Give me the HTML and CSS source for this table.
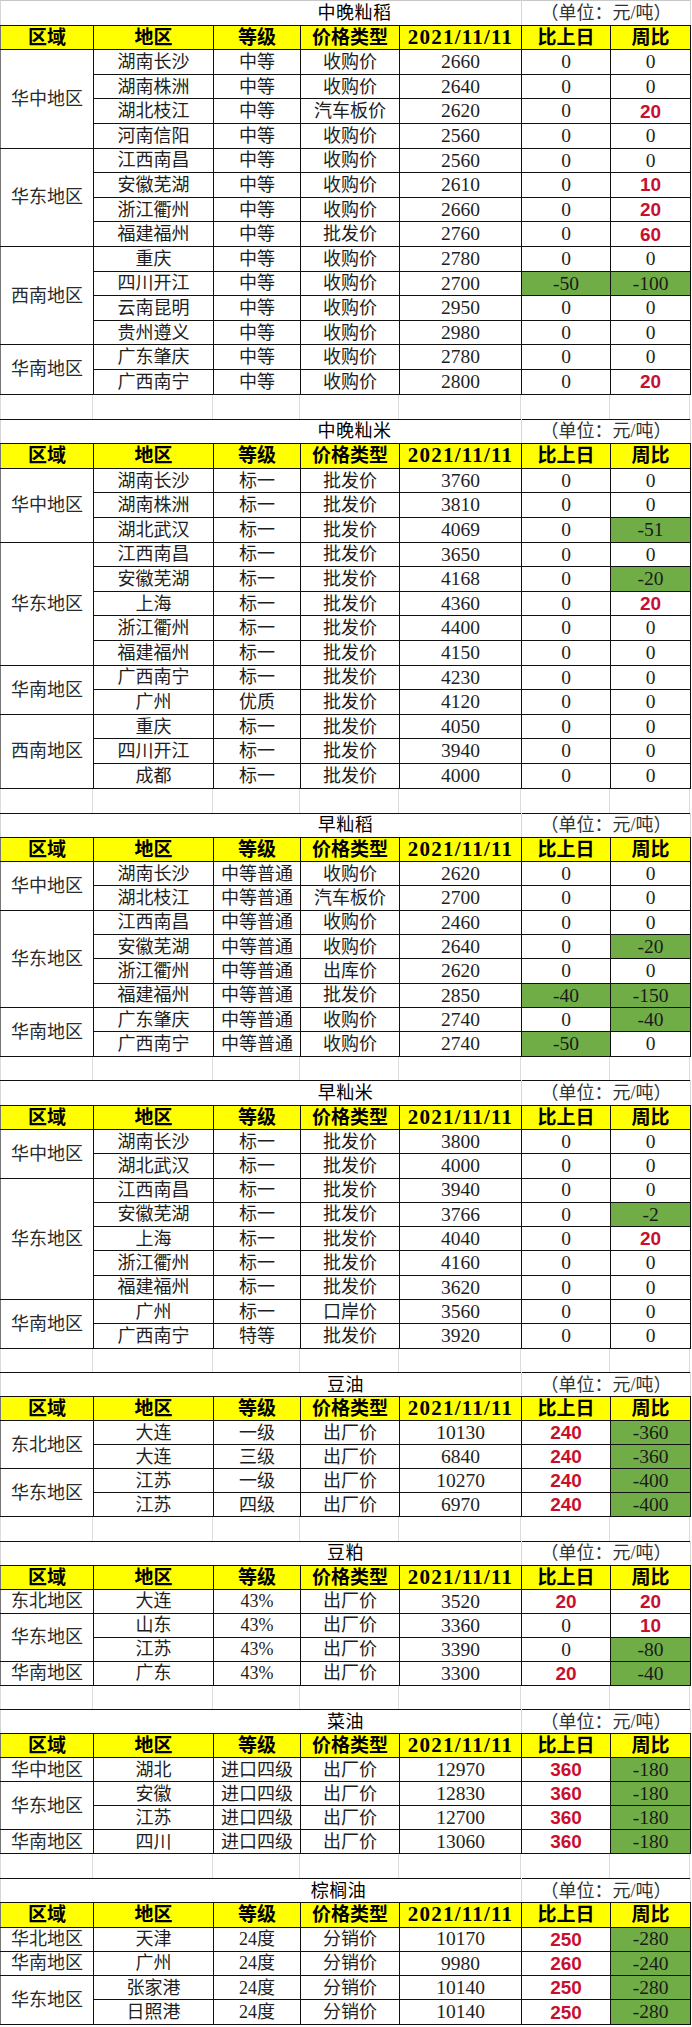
FILE: index.html
```html
<!DOCTYPE html>
<html lang="zh-CN">
<head>
<meta charset="utf-8">
<title>粮油价格</title>
<link rel="stylesheet" href="styles.css">
</head>
<body>
<div class="sheet">

<table class="grid first">
<colgroup><col class="c1"><col class="c2"><col class="c3"><col class="c4"><col class="c5"><col class="c6"><col class="c7"></colgroup>
<tr class="title"><td colspan="5" class="ttl wide">中晚籼稻</td><td colspan="2" class="unit">（单位：元/吨）</td></tr>
<tr class="head"><th>区域</th><th>地区</th><th>等级</th><th>价格类型</th><th class="dt">2021/11/11</th><th>比上日</th><th>周比</th></tr>
<tr><td rowspan="4" class="reg">华中地区</td><td>湖南长沙</td><td>中等</td><td>收购价</td><td class="n">2660</td><td class="n">0</td><td class="n">0</td></tr>
<tr><td>湖南株洲</td><td>中等</td><td>收购价</td><td class="n">2640</td><td class="n">0</td><td class="n">0</td></tr>
<tr><td>湖北枝江</td><td>中等</td><td>汽车板价</td><td class="n">2620</td><td class="n">0</td><td class="n up">20</td></tr>
<tr><td>河南信阳</td><td>中等</td><td>收购价</td><td class="n">2560</td><td class="n">0</td><td class="n">0</td></tr>
<tr><td rowspan="4" class="reg">华东地区</td><td>江西南昌</td><td>中等</td><td>收购价</td><td class="n">2560</td><td class="n">0</td><td class="n">0</td></tr>
<tr><td>安徽芜湖</td><td>中等</td><td>收购价</td><td class="n">2610</td><td class="n">0</td><td class="n up">10</td></tr>
<tr><td>浙江衢州</td><td>中等</td><td>收购价</td><td class="n">2660</td><td class="n">0</td><td class="n up">20</td></tr>
<tr><td>福建福州</td><td>中等</td><td>批发价</td><td class="n">2760</td><td class="n">0</td><td class="n up">60</td></tr>
<tr><td rowspan="4" class="reg">西南地区</td><td>重庆</td><td>中等</td><td>收购价</td><td class="n">2780</td><td class="n">0</td><td class="n">0</td></tr>
<tr><td>四川开江</td><td>中等</td><td>收购价</td><td class="n">2700</td><td class="n dn">-50</td><td class="n dn">-100</td></tr>
<tr><td>云南昆明</td><td>中等</td><td>收购价</td><td class="n">2950</td><td class="n">0</td><td class="n">0</td></tr>
<tr><td>贵州遵义</td><td>中等</td><td>收购价</td><td class="n">2980</td><td class="n">0</td><td class="n">0</td></tr>
<tr><td rowspan="2" class="reg">华南地区</td><td>广东肇庆</td><td>中等</td><td>收购价</td><td class="n">2780</td><td class="n">0</td><td class="n">0</td></tr>
<tr><td>广西南宁</td><td>中等</td><td>收购价</td><td class="n">2800</td><td class="n">0</td><td class="n up">20</td></tr>
</table>
<div class="gap"><span></span><span></span><span></span><span></span><span></span><span></span><span></span></div>

<table class="grid">
<colgroup><col class="c1"><col class="c2"><col class="c3"><col class="c4"><col class="c5"><col class="c6"><col class="c7"></colgroup>
<tr class="title"><td colspan="5" class="ttl wide">中晚籼米</td><td colspan="2" class="unit">（单位：元/吨）</td></tr>
<tr class="head"><th>区域</th><th>地区</th><th>等级</th><th>价格类型</th><th class="dt">2021/11/11</th><th>比上日</th><th>周比</th></tr>
<tr><td rowspan="3" class="reg">华中地区</td><td>湖南长沙</td><td>标一</td><td>批发价</td><td class="n">3760</td><td class="n">0</td><td class="n">0</td></tr>
<tr><td>湖南株洲</td><td>标一</td><td>批发价</td><td class="n">3810</td><td class="n">0</td><td class="n">0</td></tr>
<tr><td>湖北武汉</td><td>标一</td><td>批发价</td><td class="n">4069</td><td class="n">0</td><td class="n dn">-51</td></tr>
<tr><td rowspan="5" class="reg">华东地区</td><td>江西南昌</td><td>标一</td><td>批发价</td><td class="n">3650</td><td class="n">0</td><td class="n">0</td></tr>
<tr><td>安徽芜湖</td><td>标一</td><td>批发价</td><td class="n">4168</td><td class="n">0</td><td class="n dn">-20</td></tr>
<tr><td>上海</td><td>标一</td><td>批发价</td><td class="n">4360</td><td class="n">0</td><td class="n up">20</td></tr>
<tr><td>浙江衢州</td><td>标一</td><td>批发价</td><td class="n">4400</td><td class="n">0</td><td class="n">0</td></tr>
<tr><td>福建福州</td><td>标一</td><td>批发价</td><td class="n">4150</td><td class="n">0</td><td class="n">0</td></tr>
<tr><td rowspan="2" class="reg">华南地区</td><td>广西南宁</td><td>标一</td><td>批发价</td><td class="n">4230</td><td class="n">0</td><td class="n">0</td></tr>
<tr><td>广州</td><td>优质</td><td>批发价</td><td class="n">4120</td><td class="n">0</td><td class="n">0</td></tr>
<tr><td rowspan="3" class="reg">西南地区</td><td>重庆</td><td>标一</td><td>批发价</td><td class="n">4050</td><td class="n">0</td><td class="n">0</td></tr>
<tr><td>四川开江</td><td>标一</td><td>批发价</td><td class="n">3940</td><td class="n">0</td><td class="n">0</td></tr>
<tr><td>成都</td><td>标一</td><td>批发价</td><td class="n">4000</td><td class="n">0</td><td class="n">0</td></tr>
</table>
<div class="gap"><span></span><span></span><span></span><span></span><span></span><span></span><span></span></div>

<table class="grid compact">
<colgroup><col class="c1"><col class="c2"><col class="c3"><col class="c4"><col class="c5"><col class="c6"><col class="c7"></colgroup>
<tr class="title"><td colspan="5" class="ttl">早籼稻</td><td colspan="2" class="unit">（单位：元/吨）</td></tr>
<tr class="head"><th>区域</th><th>地区</th><th>等级</th><th>价格类型</th><th class="dt">2021/11/11</th><th>比上日</th><th>周比</th></tr>
<tr><td rowspan="2" class="reg">华中地区</td><td>湖南长沙</td><td>中等普通</td><td>收购价</td><td class="n">2620</td><td class="n">0</td><td class="n">0</td></tr>
<tr><td>湖北枝江</td><td>中等普通</td><td>汽车板价</td><td class="n">2700</td><td class="n">0</td><td class="n">0</td></tr>
<tr><td rowspan="4" class="reg">华东地区</td><td>江西南昌</td><td>中等普通</td><td>收购价</td><td class="n">2460</td><td class="n">0</td><td class="n">0</td></tr>
<tr><td>安徽芜湖</td><td>中等普通</td><td>收购价</td><td class="n">2640</td><td class="n">0</td><td class="n dn">-20</td></tr>
<tr><td>浙江衢州</td><td>中等普通</td><td>出库价</td><td class="n">2620</td><td class="n">0</td><td class="n">0</td></tr>
<tr><td>福建福州</td><td>中等普通</td><td>批发价</td><td class="n">2850</td><td class="n dn">-40</td><td class="n dn">-150</td></tr>
<tr><td rowspan="2" class="reg">华南地区</td><td>广东肇庆</td><td>中等普通</td><td>收购价</td><td class="n">2740</td><td class="n">0</td><td class="n dn">-40</td></tr>
<tr><td>广西南宁</td><td>中等普通</td><td>收购价</td><td class="n">2740</td><td class="n dn">-50</td><td class="n">0</td></tr>
</table>
<div class="gap compact"><span></span><span></span><span></span><span></span><span></span><span></span><span></span></div>

<table class="grid compact">
<colgroup><col class="c1"><col class="c2"><col class="c3"><col class="c4"><col class="c5"><col class="c6"><col class="c7"></colgroup>
<tr class="title"><td colspan="5" class="ttl">早籼米</td><td colspan="2" class="unit">（单位：元/吨）</td></tr>
<tr class="head"><th>区域</th><th>地区</th><th>等级</th><th>价格类型</th><th class="dt">2021/11/11</th><th>比上日</th><th>周比</th></tr>
<tr><td rowspan="2" class="reg">华中地区</td><td>湖南长沙</td><td>标一</td><td>批发价</td><td class="n">3800</td><td class="n">0</td><td class="n">0</td></tr>
<tr><td>湖北武汉</td><td>标一</td><td>批发价</td><td class="n">4000</td><td class="n">0</td><td class="n">0</td></tr>
<tr><td rowspan="5" class="reg">华东地区</td><td>江西南昌</td><td>标一</td><td>批发价</td><td class="n">3940</td><td class="n">0</td><td class="n">0</td></tr>
<tr><td>安徽芜湖</td><td>标一</td><td>批发价</td><td class="n">3766</td><td class="n">0</td><td class="n dn">-2</td></tr>
<tr><td>上海</td><td>标一</td><td>批发价</td><td class="n">4040</td><td class="n">0</td><td class="n up">20</td></tr>
<tr><td>浙江衢州</td><td>标一</td><td>批发价</td><td class="n">4160</td><td class="n">0</td><td class="n">0</td></tr>
<tr><td>福建福州</td><td>标一</td><td>批发价</td><td class="n">3620</td><td class="n">0</td><td class="n">0</td></tr>
<tr><td rowspan="2" class="reg">华南地区</td><td>广州</td><td>标一</td><td>口岸价</td><td class="n">3560</td><td class="n">0</td><td class="n">0</td></tr>
<tr><td>广西南宁</td><td>特等</td><td>批发价</td><td class="n">3920</td><td class="n">0</td><td class="n">0</td></tr>
</table>
<div class="gap compact"><span></span><span></span><span></span><span></span><span></span><span></span><span></span></div>

<table class="grid tight">
<colgroup><col class="c1"><col class="c2"><col class="c3"><col class="c4"><col class="c5"><col class="c6"><col class="c7"></colgroup>
<tr class="title"><td colspan="5" class="ttl">豆油</td><td colspan="2" class="unit">（单位：元/吨）</td></tr>
<tr class="head"><th>区域</th><th>地区</th><th>等级</th><th>价格类型</th><th class="dt">2021/11/11</th><th>比上日</th><th>周比</th></tr>
<tr><td rowspan="2" class="reg">东北地区</td><td>大连</td><td>一级</td><td>出厂价</td><td class="n">10130</td><td class="n up">240</td><td class="n dn">-360</td></tr>
<tr><td>大连</td><td>三级</td><td>出厂价</td><td class="n">6840</td><td class="n up">240</td><td class="n dn">-360</td></tr>
<tr><td rowspan="2" class="reg">华东地区</td><td>江苏</td><td>一级</td><td>出厂价</td><td class="n">10270</td><td class="n up">240</td><td class="n dn">-400</td></tr>
<tr><td>江苏</td><td>四级</td><td>出厂价</td><td class="n">6970</td><td class="n up">240</td><td class="n dn">-400</td></tr>
</table>
<div class="gap tight"><span></span><span></span><span></span><span></span><span></span><span></span><span></span></div>

<table class="grid tight">
<colgroup><col class="c1"><col class="c2"><col class="c3"><col class="c4"><col class="c5"><col class="c6"><col class="c7"></colgroup>
<tr class="title"><td colspan="5" class="ttl">豆粕</td><td colspan="2" class="unit">（单位：元/吨）</td></tr>
<tr class="head"><th>区域</th><th>地区</th><th>等级</th><th>价格类型</th><th class="dt">2021/11/11</th><th>比上日</th><th>周比</th></tr>
<tr><td class="reg">东北地区</td><td>大连</td><td>43%</td><td>出厂价</td><td class="n">3520</td><td class="n up">20</td><td class="n up">20</td></tr>
<tr><td rowspan="2" class="reg">华东地区</td><td>山东</td><td>43%</td><td>出厂价</td><td class="n">3360</td><td class="n">0</td><td class="n up">10</td></tr>
<tr><td>江苏</td><td>43%</td><td>出厂价</td><td class="n">3390</td><td class="n">0</td><td class="n dn">-80</td></tr>
<tr><td class="reg">华南地区</td><td>广东</td><td>43%</td><td>出厂价</td><td class="n">3300</td><td class="n up">20</td><td class="n dn">-40</td></tr>
</table>
<div class="gap tight"><span></span><span></span><span></span><span></span><span></span><span></span><span></span></div>

<table class="grid tight">
<colgroup><col class="c1"><col class="c2"><col class="c3"><col class="c4"><col class="c5"><col class="c6"><col class="c7"></colgroup>
<tr class="title"><td colspan="5" class="ttl">菜油</td><td colspan="2" class="unit">（单位：元/吨）</td></tr>
<tr class="head"><th>区域</th><th>地区</th><th>等级</th><th>价格类型</th><th class="dt">2021/11/11</th><th>比上日</th><th>周比</th></tr>
<tr><td class="reg">华中地区</td><td>湖北</td><td>进口四级</td><td>出厂价</td><td class="n">12970</td><td class="n up">360</td><td class="n dn">-180</td></tr>
<tr><td rowspan="2" class="reg">华东地区</td><td>安徽</td><td>进口四级</td><td>出厂价</td><td class="n">12830</td><td class="n up">360</td><td class="n dn">-180</td></tr>
<tr><td>江苏</td><td>进口四级</td><td>出厂价</td><td class="n">12700</td><td class="n up">360</td><td class="n dn">-180</td></tr>
<tr><td class="reg">华南地区</td><td>四川</td><td>进口四级</td><td>出厂价</td><td class="n">13060</td><td class="n up">360</td><td class="n dn">-180</td></tr>
</table>
<div class="gap tight"><span></span><span></span><span></span><span></span><span></span><span></span><span></span></div>

<table class="grid compact">
<colgroup><col class="c1"><col class="c2"><col class="c3"><col class="c4"><col class="c5"><col class="c6"><col class="c7"></colgroup>
<tr class="title"><td colspan="5" class="ttl narrow">棕榈油</td><td colspan="2" class="unit">（单位：元/吨）</td></tr>
<tr class="head"><th>区域</th><th>地区</th><th>等级</th><th>价格类型</th><th class="dt">2021/11/11</th><th>比上日</th><th>周比</th></tr>
<tr><td class="reg">华北地区</td><td>天津</td><td>24度</td><td>分销价</td><td class="n">10170</td><td class="n up">250</td><td class="n dn">-280</td></tr>
<tr><td class="reg">华南地区</td><td>广州</td><td>24度</td><td>分销价</td><td class="n">9980</td><td class="n up">260</td><td class="n dn">-240</td></tr>
<tr><td rowspan="2" class="reg">华东地区</td><td>张家港</td><td>24度</td><td>分销价</td><td class="n">10140</td><td class="n up">250</td><td class="n dn">-280</td></tr>
<tr><td>日照港</td><td>24度</td><td>分销价</td><td class="n">10140</td><td class="n up">250</td><td class="n dn">-280</td></tr>
</table>

</div>
</body>
</html>
```

FILE: styles.css
```css
html, body {
  margin: 0;
  padding: 0;
  background: #fff;
}

body {
  font-family: "Liberation Serif", "Noto Sans CJK SC", serif;
  color: #1e1e1e;
}

.sheet {
  width: 690px;
}

.grid {
  width: 690px;
  table-layout: fixed;
  border-collapse: collapse;
  border-spacing: 0;
}

.c1 { width: 93px; }
.c2 { width: 120px; }
.c3 { width: 87px; }
.c4 { width: 99px; }
.c5 { width: 122px; }
.c6 { width: 89px; }
.c7 { width: 80px; }

.grid tr {
  height: 24.6px;
}

.grid.compact tr {
  height: 24.3px;
}

.grid.tight tr {
  height: 24px;
}

.grid td,
.grid th {
  padding: 0;
  border: 1px solid #111;
  text-align: center;
  vertical-align: middle;
  line-height: 1;
  white-space: nowrap;
  overflow: hidden;
  font-size: 18px;
  font-weight: 400;
}

.grid td:first-child,
.grid th:first-child {
  border-left-color: #777;
}

/* title row */
.grid .title td {
  border-top: 1px solid #111;
  border-bottom: 1px solid #111;
  border-left: 1px solid #d6d6d6;
  border-right: 1px solid #d6d6d6;
}

.grid.first .title td {
  border-top: 1px solid #c8c8c8;
}

.ttl {
  font-weight: 700;
  font-size: 19px;
  color: #000;
  text-align: center;
  padding-left: 169px !important;
  letter-spacing: 0.5px;
}

.ttl.wide {
  padding-left: 187px !important;
}

.ttl.narrow {
  padding-left: 155px !important;
}

.unit {
  font-size: 18px !important;
  color: #333;
}

/* header row */
.head th {
  background: #ffff00;
  font-weight: 700;
  font-size: 19px;
  color: #000;
}

.head th.dt {
  font-size: 21px;
  letter-spacing: 1.2px;
}

.reg {
  color: #2a2a2a;
}

.grid td.n {
  font-size: 19.5px;
}

.grid td.up {
  font-family: "Liberation Sans", sans-serif;
  font-weight: 700;
  font-size: 19px;
  color: #c8102e;
}

.grid td.dn {
  background: #70ad47;
  color: #1a1a1a;
}

/* blank separator rows */
.gap {
  display: grid;
  grid-template-columns: 93px 120px 87px 99px 122px 89px 80px;
  height: 24.1px;
  box-sizing: border-box;
}

.gap.compact {
  height: 23.8px;
}

.gap.tight {
  height: 23.5px;
}

.gap span {
  border-right: 1px solid #dcdcdc;
}

.gap span:first-child {
  border-left: 1px solid #dcdcdc;
}
```
